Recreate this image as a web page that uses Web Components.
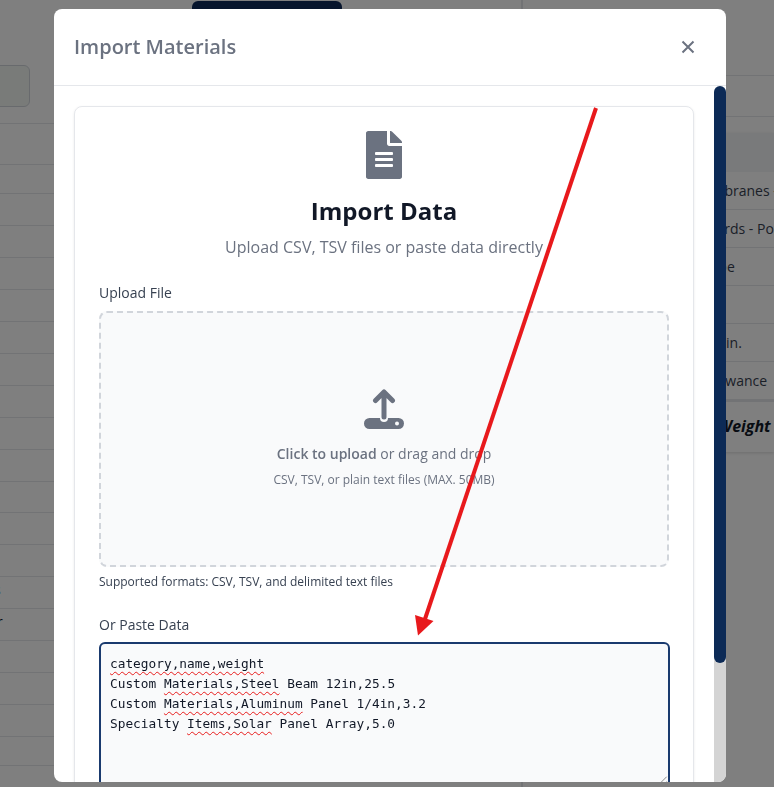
<!DOCTYPE html>
<html lang="en">
<head>
<meta charset="utf-8">
<title>Import Materials</title>
<style>
  html, body { margin: 0; height: 787px; overflow: hidden; background: #fff; }
  body { font-family: "Open Sans", "Liberation Sans", sans-serif; }
</style>
</head>
<body>
<page-behind></page-behind>
<import-modal heading="Import Materials">
  <import-card></import-card>
</import-modal>
<red-arrow></red-arrow>

<script>
// --- helper: attach an open shadow root with the given html ---
class Base extends HTMLElement {
  constructor(){
    super()
    this.attachShadow({mode: 'open'})
    this.shadowRoot.innerHTML = this.template
  }
}

// The page that is dimmed behind the modal
class PageBehind extends Base {
  get template(){ return /* html */`
    <style>
      :host { display: flex; height: 787px; overflow: hidden; color: #374151; font-size: 14px; position: relative; }
      .left { width: 521px; flex: none; border-right: 2px solid #e5e7eb; box-sizing: content-box; }
      .top { height: 124px; box-sizing: border-box; padding-top: 65px; position: relative; border-bottom: 1px solid #e5e7eb; }
      .small-btn { width: 31px; height: 42px; margin-left: -1px; box-sizing: border-box; border: 1px solid #d1d5db; border-radius: 0 6px 6px 0; background: #f3f6f3; }
      .save { position: absolute; left: 192px; top: 1px; width: 150px; height: 50px; border-radius: 6px; background: #0f2a5a; }
      .row { box-sizing: border-box; border-bottom: 1px solid #e5e7eb; overflow: hidden; line-height: 26px; white-space: nowrap; color: #1e40af; }
      .row span { display: inline-block; }
      .cut { padding-left: 265px; line-height: 18px; padding-top: 14px; white-space: nowrap; color: #1f2937; }
      .right { flex: 1; min-width: 0; }
      .r-head { height: 76px; border-bottom: 1px solid #e5e7eb; box-sizing: border-box; }
      .r-sub { height: 41px; border-bottom: 1px solid #e5e7eb; box-sizing: border-box; }
      .r-card { margin-top: 16px; background: #fff; box-shadow: 0 1px 3px rgba(0,0,0,.15); }
      .band { height: 39px; background: #f3f4f6; }
      .line { height: 38px; line-height: 38px; box-sizing: border-box; border-bottom: 1px solid #e5e7eb; white-space: nowrap; overflow: hidden; }
      .total { height: 50px; line-height: 48px; border-top: 2px solid #e5e7eb; font-size: 16px; font-weight: 700; font-style: italic; color: #111827; white-space: nowrap; overflow: hidden; }
    </style>
    <div class="left">
      <div class="top"><div class="small-btn"></div><div class="save"></div></div>
      <div class="row" style="height:41px"></div>
      <div class="row" style="height:29px"></div>
      ${[32,32,32,32,32,32,32,32,32,31,32,32,32,32,32,32,32,29,32].map((h, i) => `<div class="row" style="height:${h}px">${i == 12 ? '<span style="margin-left:-6px">s</span>' : i == 13 ? '<span style="margin-left:-3px;color:#111827">r</span>' : ''}</div>`).join('')}
      <div class="cut">135 lbs</div>
    </div>
    <div class="right">
      <div class="r-head"></div>
      <div class="r-sub"></div>
      <div class="r-card">
        <div class="band"></div>
        <div class="line" style="padding-left:168px">Membranes - EPDM</div>
        <div class="line" style="padding-left:176px">Boards - Polyiso</div>
        <div class="line" style="padding-left:128px">Sealant Tape</div>
        <div class="line"></div>
        <div class="line" style="padding-left:144px">Deck 1.5 in.</div>
        <div class="line" style="padding-left:178px">Allowance</div>
        <div class="total" style="padding-left:152px">Total Weight</div>
      </div>
    </div>
  `}
}
customElements.define('page-behind', PageBehind)

// Dim layer + dialog box
class ImportModal extends Base {
  get template(){ return /* html */`
    <style>
      :host { display: block; position: fixed; inset: 0; background: rgba(0,0,0,.5); }
      .box { position: absolute; left: 54px; top: 9px; width: 672px; height: 773px; display: flex; flex-direction: column; background: #fff; border-radius: 8px; overflow: hidden; }
      header { flex: none; height: 77px; box-sizing: border-box; border-bottom: 1px solid #e5e7eb; display: flex; align-items: center; justify-content: space-between; padding: 0 30px 1px 20px; }
      h2 { margin: 0; font-size: 20px; font-weight: 600; color: #6b7280; }
      svg { display: block; }
      .main { flex: 1; min-height: 0; display: flex; }
      .body { flex: 1; min-width: 0; overflow: hidden; padding: 20px; box-sizing: border-box; }
      .rail { flex: none; width: 12px; background: linear-gradient(#fff 12px, #d4d4d4 12px); }
      .thumb { height: 577px; background: #0c2a56; border-radius: 6px; }
    </style>
    <div class="box">
      <header>
        <h2>${this.getAttribute('heading') || ''}</h2>
        <svg width="16" height="16" viewBox="0 0 16 16" fill="none" stroke="#6b7280" stroke-width="2"><path d="M2.500 2.500l11 11M13.500 2.500l-11 11"/></svg>
      </header>
      <div class="main">
        <div class="body"><slot></slot></div>
        <div class="rail"><div class="thumb"></div></div>
      </div>
    </div>
  `}
}
customElements.define('import-modal', ImportModal)

class ImportCard extends Base {
  get template(){ return /* html */`
    <style>
      :host { display: block; background: #fff; border: 1px solid #e5e7eb; border-radius: 8px; box-shadow: 0 1px 3px rgba(0,0,0,.08); padding: 24px; color: #111827; }
      .intro { display: flex; flex-direction: column; align-items: center; }
      svg { display: block; }
      h3 { margin: 14px 0 0; font-size: 24px; line-height: 36px; font-weight: 700; color: #111827; }
      .sub { margin: 6px 0 0; font-size: 16px; line-height: 24px; color: #6b7280; }
      label { display: block; font-size: 14px; line-height: 21px; font-weight: 500; color: #374151; }
      .upload { margin-top: 23px; }
      .hint { margin: 6px 0 0; font-size: 12px; line-height: 18px; color: #374151; }
      .paste { margin-top: 23px; }
    </style>
    <div class="intro">
      <svg width="36" height="48" viewBox="0 0 384 512" fill="#6b7280"><path d="M224 136V0H24C10.700 0 0 10.700 0 24v464c0 13.300 10.700 24 24 24h336c13.300 0 24-10.700 24-24V160H248c-13.200 0-24-10.800-24-24zm64 236c0 6.600-5.400 12-12 12H108c-6.600 0-12-5.400-12-12v-8c0-6.600 5.400-12 12-12h168c6.600 0 12 5.400 12 12v8zm0-64c0 6.600-5.400 12-12 12H108c-6.600 0-12-5.400-12-12v-8c0-6.600 5.400-12 12-12h168c6.600 0 12 5.400 12 12v8zm0-72v8c0 6.600-5.400 12-12 12H108c-6.600 0-12-5.400-12-12v-8c0-6.600 5.400-12 12-12h168c6.600 0 12 5.400 12 12zm96-114.100v6.100H256V0h6.100c6.400 0 12.500 2.500 17 7l97.900 98c4.500 4.500 7 10.600 7 16.900z"/></svg>
      <h3>Import Data</h3>
      <p class="sub">Upload CSV, TSV files or paste data directly</p>
    </div>
    <div class="upload">
      <label>Upload File</label>
      <drop-zone></drop-zone>
      <p class="hint">Supported formats: CSV, TSV, and delimited text files</p>
    </div>
    <div class="paste">
      <label>Or Paste Data</label>
      <paste-box></paste-box>
    </div>
  `}
}
customElements.define('import-card', ImportCard)

class DropZone extends Base {
  get template(){ return /* html */`
    <style>
      :host { display: flex; flex-direction: column; align-items: center; box-sizing: border-box; height: 256px; margin-top: 8px; padding-top: 76px; background: #f9fafb; border: 2px dashed #d1d5db; border-radius: 8px; color: #6b7280; }
      svg { display: block; }
      .main { margin: 14px 0 0; font-size: 14px; line-height: 21px; }
      b { font-weight: 600; }
      .small { margin: 7px 0 0; font-size: 12px; line-height: 18px; }
    </style>
    <svg width="40" height="40" viewBox="0 0 40 40">
      <rect x="0" y="29" width="40" height="11" rx="5.500" fill="#6b7280"/>
      <circle cx="33" cy="34.500" r="2" fill="#f9fafb"/>
      <path d="M20 20V29" stroke="#f9fafb" stroke-width="8" stroke-linecap="round"/>
      <path d="M20 3V28M11.500 11.500L20 3L28.500 11.500" fill="none" stroke="#6b7280" stroke-width="5" stroke-linecap="round" stroke-linejoin="round"/>
    </svg>
    <p class="main"><b>Click to upload</b> or drag and drop</p>
    <p class="small">CSV, TSV, or plain text files (MAX. 50MB)</p>
  `}
}
customElements.define('drop-zone', DropZone)

// Looks like a focused textarea; spellcheck squiggles and grip are part of the picture
class PasteBox extends Base {
  get template(){ return /* html */`
    <style>
      :host { display: block; position: relative; box-sizing: border-box; width: 571px; height: 150px; margin-top: 7px; padding: 10px 9px; background: #f9fafb; border: 2px solid #1a3a6e; border-radius: 6px; overflow: hidden; }
      pre { margin: 0; font-family: "DejaVu Sans Mono", "Liberation Mono", monospace; font-size: 12.8px; line-height: 20px; color: #111827; }
      u { text-decoration: underline wavy #e81c1c 1.2px; text-underline-offset: 3px; text-decoration-skip-ink: none; }
      svg { position: absolute; right: 0; bottom: 0; display: block; }
    </style>
    <pre><u>category,name,weight</u>
Custom <u>Materials,Steel</u> Beam 12in,25.5
Custom <u>Materials,Aluminum</u> Panel 1/4in,3.2
Specialty <u>Items,Solar</u> Panel Array,5.0</pre>
    <svg width="16" height="16" viewBox="0 0 16 16" stroke="#8a8a8a" stroke-width="1" fill="none"><path d="M14.700 2.700L3 14.400M14.700 7.500L7.500 14.700"/></svg>
  `}
}
customElements.define('paste-box', PasteBox)

// Red annotation arrow drawn over the screenshot
class RedArrow extends Base {
  get template(){ return /* html */`
    <style>
      :host { display: block; position: fixed; inset: 0; pointer-events: none; }
      svg { display: block; }
    </style>
    <svg width="774" height="787" viewBox="0 0 774 787">
      <path d="M596 108L424 622" stroke="#e8191c" stroke-width="4" fill="none"/>
      <path d="M418 635.500L415 615L433.500 621z" fill="#e8191c"/>
    </svg>
  `}
}
customElements.define('red-arrow', RedArrow)
</script>
</body>
</html>
